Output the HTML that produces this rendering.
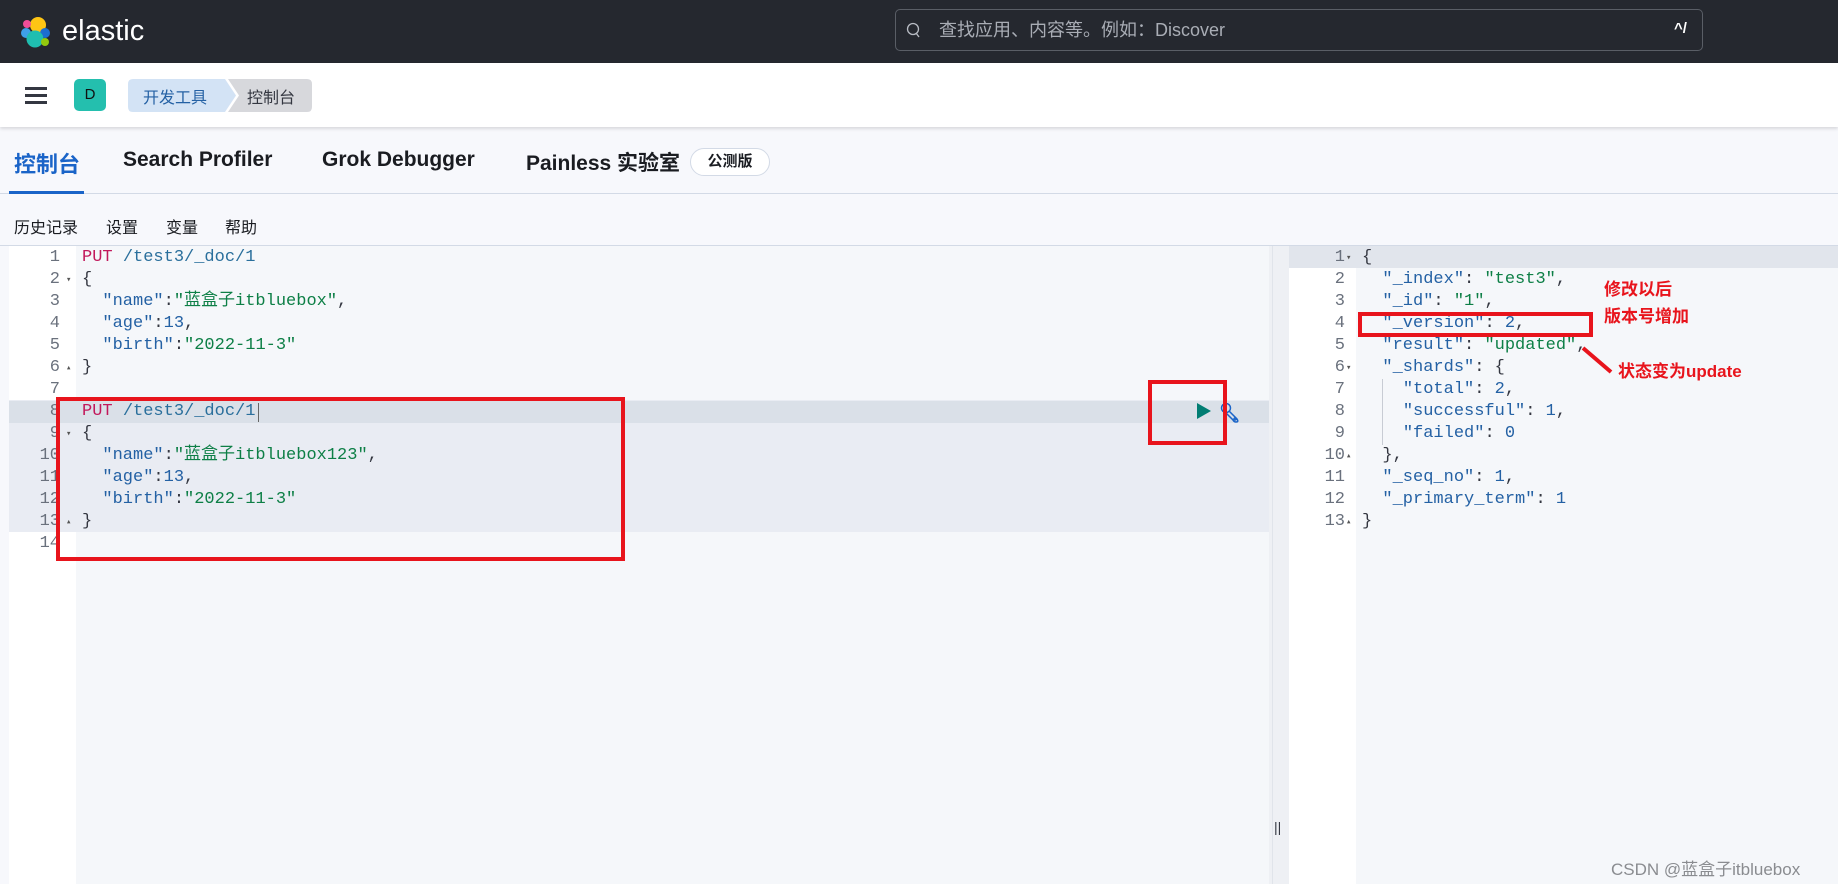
<!DOCTYPE html>
<html><head><meta charset="utf-8"><style>
*{margin:0;padding:0;box-sizing:border-box}
body{width:1838px;height:884px;overflow:hidden;background:#f7f8fc;font-family:"Liberation Sans","Noto Sans CJK SC",sans-serif;position:relative}
.a{position:absolute}
.hdr{left:0;top:0;width:1838px;height:63px;background:#25282f}
.bar{left:0;top:63px;width:1838px;height:64px;background:#fff;box-shadow:0 2px 3px rgba(0,0,0,.12)}
.mono{font-family:"Liberation Mono","Noto Sans CJK SC",monospace;font-size:17px;white-space:pre;line-height:22px}
.ln{color:#6a717d;text-align:right;width:60px}
.k{color:#2461a4}.s{color:#0d7f46}.n{color:#2461a4}.p{color:#c2185b}.u{color:#2a6f9c}.d{color:#343741}
.red{border:4px solid #e8141c}
.ann{color:#e8141c;font-weight:bold;font-size:17px;font-family:"Liberation Sans","Noto Sans CJK SC",sans-serif}
</style></head><body>
<div class="a hdr"></div>
<svg class="a" style="left:19px;top:15px" width="34" height="34" viewBox="0 0 34 34">
<circle cx="19" cy="10" r="8" fill="#fec514"/><circle cx="8" cy="9" r="4" fill="#f04e98"/><circle cx="7" cy="18" r="5" fill="#3ea0e8"/><circle cx="26" cy="18" r="5" fill="#1b6ed0"/><circle cx="16" cy="24" r="8.5" fill="#1fbeb0"/><circle cx="26" cy="27" r="4" fill="#93c90e"/>
</svg>
<div class="a" style="left:62px;top:12px;color:#fff;font-size:29px;line-height:38px">elastic</div>
<div class="a" style="left:895px;top:9px;width:808px;height:42px;border:1px solid #5a5e66;border-radius:5px;background:#25282f"></div>
<svg class="a" style="left:906px;top:21px" width="16" height="18"><circle cx="7" cy="8" r="5.5" stroke="#b8bcc4" stroke-width="1.3" fill="none"/><line x1="10" y1="12" x2="13" y2="16" stroke="#b8bcc4" stroke-width="1.3"/></svg>
<div class="a" style="left:939px;top:19px;color:#a9adb5;font-size:18px;line-height:22px">查找应用、内容等。例如：Discover</div>
<div class="a" style="left:1674px;top:20px;color:#fff;font-size:15px;font-weight:bold">^/</div>
<div class="a bar"></div>
<div class="a" style="left:25px;top:87px;width:22px;height:3px;background:#343741;box-shadow:0 7px 0 #343741,0 14px 0 #343741"></div>
<div class="a" style="left:74px;top:79px;width:32px;height:32px;border-radius:5px;background:#24bfae;color:#111;font-size:15px;text-align:center;line-height:32px">D</div>
<svg class="a" style="left:128px;top:79px" width="184" height="33"><path d="M5 0H97L108 16.5 97 33H5Q0 33 0 28V5Q0 0 5 0Z" fill="#d3e3f5"/><path d="M100 0H179Q184 0 184 5V28Q184 33 179 33H100L111 16.5Z" fill="#d7d8dc"/></svg>
<div class="a" style="left:143px;top:84px;color:#2461a4;font-size:16px">开发工具</div>
<div class="a" style="left:247px;top:84px;color:#343741;font-size:16px">控制台</div>
<div class="a" style="left:0;top:193px;width:1838px;height:1px;background:#d3dae6"></div>
<div class="a" style="left:14px;top:147px;color:#1a64c8;font-size:22px;font-weight:bold">控制台</div>
<div class="a" style="left:9px;top:191px;width:75px;height:3px;background:#1a64c8"></div>
<div class="a" style="left:123px;top:148px;color:#1a1c21;font-size:21px;font-weight:bold">Search Profiler</div>
<div class="a" style="left:322px;top:148px;color:#1a1c21;font-size:21px;font-weight:bold">Grok Debugger</div>
<div class="a" style="left:526px;top:147px;color:#1a1c21;font-size:21px;font-weight:bold">Painless 实验室</div>
<div class="a" style="left:690px;top:148px;width:80px;height:28px;border:1px solid #d3dae6;border-radius:14px;background:#fff;font-size:15px;font-weight:bold;text-align:center;line-height:26px;color:#1a1c21">公测版</div>
<div class="a" style="left:14px;top:214px;font-size:16px;color:#1a1c21">历史记录</div>
<div class="a" style="left:106px;top:214px;font-size:16px;color:#1a1c21">设置</div>
<div class="a" style="left:166px;top:214px;font-size:16px;color:#1a1c21">变量</div>
<div class="a" style="left:225px;top:214px;font-size:16px;color:#1a1c21">帮助</div>
<div class="a" style="left:0;top:245px;width:1838px;height:1px;background:#d3dae6"></div>
<!-- left editor -->
<div class="a" style="left:9px;top:246px;width:67px;height:638px;background:#fff"></div>
<div class="a" style="left:76px;top:246px;width:1193px;height:638px;background:#f5f7fa"></div>
<div class="a" style="left:9px;top:400px;width:1260px;height:132px;background:#e9ecf3"></div>
<div class="a" style="left:9px;top:401px;width:1260px;height:22px;background:#dae0e8"></div>
<div class="a" style="left:1269px;top:246px;width:20px;height:638px;background:#eef0f4"></div>
<div class="a" style="left:1272px;top:246px;width:1px;height:638px;background:#e0e4ea"></div>
<div class="a" style="left:1274px;top:819px;font-size:14px;color:#343741">||</div>
<div class="a mono ln" style="left:0;top:247px">1
2
3
4
5
6
7
8
9
10
11
12
13
14</div>
<div class="a mono" style="left:66px;top:247px;font-size:9px;color:#555">&nbsp;
▾



▴


▾



▴</div>
<div class="a mono d" style="left:82px;top:247px"><span class="p">PUT</span> <span class="u">/test3/_doc/1</span>
{
  <span class="k">"name"</span>:<span class="s">"蓝盒子itbluebox"</span>,
  <span class="k">"age"</span>:<span class="n">13</span>,
  <span class="k">"birth"</span>:<span class="s">"2022-11-3"</span>
}

<span class="p">PUT</span> <span class="u">/test3/_doc/1</span>
{
  <span class="k">"name"</span>:<span class="s">"蓝盒子itbluebox123"</span>,
  <span class="k">"age"</span>:<span class="n">13</span>,
  <span class="k">"birth"</span>:<span class="s">"2022-11-3"</span>
}
</div>
<div class="a" style="left:258px;top:403px;width:1px;height:19px;background:#666"></div>
<svg class="a" style="left:1195px;top:402px" width="50" height="22"><path d="M2 1L16 9 2 17Z" fill="#017d73"/><g fill="none" stroke="#1a64c8" stroke-width="1.5"><circle cx="31" cy="6" r="4.5"/><path d="M34 9L42 17Q44 20 41 20Q39 20 38 18L30 10"/><circle cx="40" cy="17" r="1"/></g></svg>
<!-- right panel -->
<div class="a" style="left:1289px;top:246px;width:67px;height:638px;background:#fff"></div>
<div class="a" style="left:1356px;top:246px;width:482px;height:638px;background:#f5f7fa"></div>
<div class="a" style="left:1289px;top:246px;width:549px;height:22px;background:#e1e5ec"></div>
<div class="a mono ln" style="left:1285px;top:247px">1
2
3
4
5
6
7
8
9
10
11
12
13</div>
<div class="a mono" style="left:1346px;top:247px;font-size:9px;color:#555">▾




▾



▴


▴</div>
<div class="a" style="left:1382px;top:379px;width:1px;height:66px;background:#c8ccd4"></div>
<div class="a mono d" style="left:1362px;top:247px">{
  <span class="k">"_index"</span>: <span class="s">"test3"</span>,
  <span class="k">"_id"</span>: <span class="s">"1"</span>,
  <span class="k">"_version"</span>: <span class="n">2</span>,
  <span class="k">"result"</span>: <span class="s">"updated"</span>,
  <span class="k">"_shards"</span>: {
    <span class="k">"total"</span>: <span class="n">2</span>,
    <span class="k">"successful"</span>: <span class="n">1</span>,
    <span class="k">"failed"</span>: <span class="n">0</span>
  },
  <span class="k">"_seq_no"</span>: <span class="n">1</span>,
  <span class="k">"_primary_term"</span>: <span class="n">1</span>
}</div>
<!-- annotations -->
<div class="a red" style="left:56px;top:397px;width:569px;height:164px"></div>
<div class="a red" style="left:1148px;top:380px;width:79px;height:65px"></div>
<div class="a red" style="left:1358px;top:312px;width:235px;height:25px"></div>
<div class="a ann" style="left:1604px;top:275px">修改以后</div>
<div class="a ann" style="left:1604px;top:302px">版本号增加</div>
<div class="a ann" style="left:1618px;top:357px">状态变为update</div>
<svg class="a" style="left:1580px;top:345px" width="36" height="32"><line x1="3" y1="3" x2="31" y2="27" stroke="#e8141c" stroke-width="4"/></svg>
<div class="a" style="left:1611px;top:855px;font-size:17px;color:#8a8c90">CSDN @蓝盒子itbluebox</div>
</body></html>
